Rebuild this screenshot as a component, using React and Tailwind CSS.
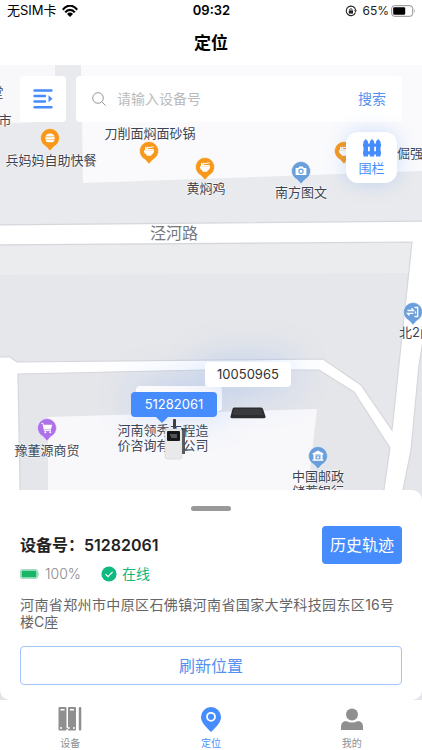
import { useState } from 'react';

const PINS = [
  { x: 50,  y: 138, kind: 'burger', color: '#f7981c' },
  { x: 149, y: 151, kind: 'noodle', color: '#f7981c' },
  { x: 205, y: 167, kind: 'noodle', color: '#f7981c' },
  { x: 344, y: 151, kind: 'noodle', color: '#f7981c' },
  { x: 301, y: 171, kind: 'camera', color: '#6b9fdc' },
  { x: 413, y: 312, kind: 'gate',   color: '#6b9fdc' },
  { x: 47,  y: 428, kind: 'cart',   color: '#ad72ea' },
  { x: 318, y: 456, kind: 'bank',   color: '#6b9fdc' },
];

const LABELS = [
  { x: -3,  y: 92,  lines: ['堂'] },
  { x: 5,   y: 120, lines: ['市'] },
  { x: 51,  y: 160, lines: ['兵妈妈自助快餐'] },
  { x: 150, y: 133, lines: ['刀削面焖面砂锅'] },
  { x: 206, y: 188, lines: ['黄焖鸡'] },
  { x: 301, y: 192, lines: ['南方图文'] },
  { x: 410, y: 153, lines: ['倔强'] },
  { x: 416, y: 332, lines: ['北2门'] },
  { x: 47,  y: 450, lines: ['豫董源商贸'] },
  { x: 163, y: 438, lines: ['河南领秀工程造', '价咨询有限公司'] },
  { x: 318, y: 484, lines: ['中国邮政', '储蓄银行'] },
];

// Map coordinates are in a 422 wide space that starts 65 below the page top
const place = ({ x, y }) => ({ left: `${(x / 422) * 100}%`, top: y - 65 });

const GLYPHS = {
  burger: (
    <g fill="#fff">
      <path d="M5.500 8.600C6 6.400 7.800 5.400 10 5.400s4 1 4.500 3.200z" />
      <rect x="5" y="9.300" width="10" height="1.600" rx=".8" />
      <path d="M5.500 11.600h9c-.2 1.800-1 2.600-2.400 2.600H7.900c-1.400 0-2.200-.8-2.400-2.600z" />
    </g>
  ),
  noodle: (
    <g fill="#fff">
      <path d="M4.800 9.300h10.400c0 2.300-1.200 3.800-2.800 4.500v.9H7.600v-.9c-1.600-.7-2.800-2.200-2.800-4.500z" />
      <path d="M6.500 9V6M8.200 9V5.600M6 7.400l8.800-1.700M6 8.600h8.800" stroke="#fff" strokeWidth="1" fill="none" />
    </g>
  ),
  camera: (
    <g>
      <path d="M4.600 7h2.700l1-1.500h3.400l1 1.500h2.700v7H4.600z" fill="#fff" />
      <circle cx="10" cy="10.300" r="2.100" fill="none" stroke="#6b9fdc" strokeWidth="1.200" />
    </g>
  ),
  gate: (
    <g stroke="#fff" strokeWidth="1.300" fill="none">
      <path d="M11.500 5.500h3.200v9h-3.200M12.500 9.500v2" />
      <path d="M4.500 8.500h6L8.500 6.300M10.500 11.300h-6l2 2.200" />
    </g>
  ),
  cart: (
    <g>
      <path d="M6.400 6.800h8.800l-1.300 4.600H7.300z" fill="#fff" />
      <path d="M4.400 5.400h1.600l1.500 7.200h6.500" stroke="#fff" strokeWidth="1" fill="none" />
      <circle cx="8.300" cy="14.200" r="1" fill="#fff" />
      <circle cx="13.200" cy="14.200" r="1" fill="#fff" />
    </g>
  ),
  bank: (
    <g>
      <path d="M4.500 7.600L10 4.500l5.500 3.100v1h-1v5h1v1.100h-11v-1.100h1v-5h-1z" fill="#fff" />
      <rect x="7.500" y="8.500" width="5" height="4.800" fill="#6b9fdc" />
      <path d="M8.600 9.200L10 10.600l1.400-1.400M10 10.600v2.400M8.700 11.500h2.600" stroke="#fff" strokeWidth=".8" fill="none" />
    </g>
  ),
};

function Pin({ pin }) {
  return (
    <svg viewBox="0 0 20 24" className="absolute w-5 h-6 -ml-[10px] -mt-[10px]" style={place(pin)} aria-hidden="true">
      <path
        d="M10 .5a9.500 9.500 0 0 1 3.800 18.200L10 23l-3.800-4.300A9.500 9.500 0 0 1 10 .5z"
        fill={pin.color}
        stroke="#fff"
        strokeWidth=".5"
      />
      {GLYPHS[pin.kind]}
    </svg>
  );
}

function MapLayer() {
  return (
    <div className="absolute inset-0 overflow-hidden bg-[#e2e3e7]">
      <svg viewBox="0 65 422 635" preserveAspectRatio="none" className="w-full h-[635px]" aria-hidden="true">
        <rect y="65" width="422" height="635" fill="#fff" />
        <g stroke="#d6d6dc" strokeWidth="1.200">
          <path d="M-5 60H430V221L-5 225z" fill="#e9eaed" />
          <path d="M-5 245L412 242L392 430L361 385L323 359L17 362L10 357H-5z" fill="#e6e7ea" />
          <path d="M18 374L205 370H319L354 392L390 448L378 530V705H24z" fill="#e5e6ea" />
          <path d="M424 335L419 365L411 450L395 530V705H430z" fill="#e5e6ea" />
          <path d="M-5 500H8V705H-5z" fill="#e2e3e7" stroke="none" />
        </g>
        <path d="M0 246L411 243L408 273L0 275z" fill="#ebecee" />
        <path d="M0 65H55V121L0 124z" fill="#f8f8fb" />
        <path d="M81 65H422V171L83 183z" fill="#fafafc" />
        <path d="M48 417L317 409L303 530H48z" fill="#f8f8fb" />
      </svg>

      <span className="absolute -translate-x-1/2 -translate-y-1/2 text-base leading-4 whitespace-nowrap text-[#77787c]" style={place({ x: 174, y: 233 })}>
        泾河路
      </span>

      {PINS.map((pin) => <Pin key={`${pin.x}-${pin.y}`} pin={pin} />)}

      {LABELS.map((label) => (
        <p
          key={label.lines[0]}
          className="absolute -translate-x-1/2 -translate-y-1/2 text-[13px] leading-[15px] whitespace-nowrap text-[#3c4452] [text-shadow:0_0_2px_#fff,0_0_2px_#fff,0_0_1px_#fff]"
          style={place(label)}
        >
          {label.lines.map((line) => <span key={line} className="block">{line}</span>)}
        </p>
      ))}

      {/* Device callouts */}
      <div
        className="absolute w-[86px] h-[25px] rounded bg-white/80 shadow-[0_0_40px_rgba(70,140,253,0.3)]"
        style={place({ x: 136, y: 386 })}
      />
      <button
        className="absolute w-[86px] h-[25px] rounded bg-white text-[13px] text-[#333] shadow-[0_0_40px_rgba(70,140,253,0.3)]"
        style={place({ x: 205, y: 362 })}
      >
        10050965
      </button>
      <button
        className="absolute w-[86px] h-[25px] rounded bg-[#468cfd] text-[13px] text-white"
        style={place({ x: 131, y: 392 })}
      >
        51282061
        <svg viewBox="0 0 12 6" className="absolute left-[25px] top-full w-3 h-[6px]" aria-hidden="true">
          <path d="M0 0h12L6 6z" fill="#468cfd" />
        </svg>
      </button>

      <svg viewBox="0 0 22 42" className="absolute w-[22px] h-[42px]" style={place({ x: 164, y: 418 })} aria-hidden="true">
        <rect x="9" y="1" width="3" height="13" rx="1" fill="#3d3f43" />
        <path d="M17 10h4v26h-4z" fill="#55575c" />
        <path d="M18.500 10v26" stroke="#2f3135" strokeWidth="1" />
        <rect x="1" y="11" width="17" height="30" rx="2" fill="#e9e9ea" stroke="#d4d4d7" strokeWidth=".6" />
        <rect x="3" y="13" width="13" height="10" rx="1" fill="#17181a" />
        <path d="M6 17h7M7 19h6" stroke="#8d8f93" strokeWidth="1" />
      </svg>
      <svg viewBox="0 0 36 12" className="absolute w-9 h-3" style={place({ x: 230, y: 407 })} aria-hidden="true">
        <path d="M4 .5h27q1.500 0 2 1.500l2.500 7.500q.3 1.800-1.500 1.800H2Q.2 11.300.5 9.500L2.500 2Q3 .5 4 .5z" fill="#2c2d2f" />
        <path d="M4 2h27l2 6H2.500z" fill="#3a3b3e" />
      </svg>
    </div>
  );
}

function StatusBar() {
  return (
    <div className="grid grid-cols-3 items-center h-[22px] pl-[7px] pr-[6px] text-[13px]">
      <div className="flex items-center gap-[5px]">
        <span>无SIM卡</span>
        <svg viewBox="0 0 16 12" className="w-4 h-3" aria-hidden="true">
          <path d="M.8 4.700C5-.6 11-.6 15.200 4.700M3.200 7.400C6 4 10 4 12.800 7.400" stroke="#000" strokeWidth="2.200" fill="none" />
          <path d="M5 8.900C6.800 7 9.200 7 11 8.900L8 12z" />
        </svg>
      </div>
      <span className="text-center font-semibold">09:32</span>
      <div className="flex items-center justify-end">
        <svg viewBox="0 0 12 12" className="w-3 h-3 mr-[5px]" fill="none" stroke="#222" aria-hidden="true">
          <path d="M10.400 7.500A4.700 4.700 0 1 1 10.600 5" strokeWidth="1.100" />
          <path d="M9 5.200h3l-1.500 2z" fill="#222" stroke="none" />
          <rect x="3.800" y="5.400" width="4.200" height="3.200" fill="#222" stroke="none" />
          <path d="M4.700 5.500V4.300q1.200-1.300 2.400 0v1.200" strokeWidth=".9" />
        </svg>
        <span className="text-xs text-[#222]">65%</span>
        <svg viewBox="0 0 25 12" className="w-[25px] h-3 ml-[2px]" aria-hidden="true">
          <rect x=".7" y=".7" width="21" height="10.600" rx="2.800" fill="none" stroke="#8c8c8c" />
          <rect x="2.200" y="2.200" width="12" height="7.600" rx="1.200" />
          <path d="M23 4q1.500 2 0 4z" fill="#8c8c8c" />
        </svg>
      </div>
    </div>
  );
}

const TABS = [
  {
    name: '设备',
    icon: (
      <g>
        <path d="M1.500 0h6Q8.500 0 8.500 1v21.500q0 1-1 1h-6q-1 0-1-1V1q0-1 1-1z" />
        <path d="M11 0h6q1 0 1 1v21.500q0 1-1 1h-6q-1 0-1-1V1q0-1 1-1z" />
        <rect x="20.800" width="2.500" height="23.500" rx="1" />
        <path d="M7 21.200h5v1H7z" />
        <g fill="#fff">
          <rect x="2.500" y="2" width="4" height="1.500" />
          <rect x="12" y="2" width="4" height="1.500" />
          <circle cx="3" cy="21" r="1" />
          <circle cx="10.800" cy="21" r="1" />
          <circle cx="16" cy="21" r="1" />
        </g>
      </g>
    ),
  },
  {
    name: '定位',
    icon: (
      <g>
        <path d="M12 0a10 10 0 0 1 10 10c0 6-6 11-10 15C8 21 2 16 2 10A10 10 0 0 1 12 0z" />
        <circle cx="12" cy="9.800" r="4" fill="none" stroke="#fff" strokeWidth="1.800" />
      </g>
    ),
  },
  {
    name: '我的',
    icon: (
      <g>
        <circle cx="12" cy="7.500" r="6" />
        <path d="M1 23v-3.500q0-5 5-5.500 6 3 12 0 5 .5 5 5.500V23z" />
      </g>
    ),
  },
];

export default function App() {
  const [query, setQuery] = useState('');
  const [tab,   setTab]   = useState('定位');

  return (
    <div className="min-h-screen flex flex-col overflow-hidden bg-white text-black font-[Inter,'Noto_Sans_CJK_SC',sans-serif]">
      <header>
        <StatusBar />
        <h1 className="h-[43px] text-center text-[17px] leading-[43px] font-bold">定位</h1>
      </header>

      <main className="relative flex-1 flex flex-col">
        <MapLayer />

        <div className="relative flex gap-[10px] px-5 pt-[11px]">
          <button aria-label="设备列表" className="flex items-center justify-center w-[46px] h-[46px] rounded bg-white">
            <svg viewBox="0 0 20 20" className="w-5 h-5" fill="none" stroke="#468cfd" strokeWidth="2.400" strokeLinecap="round" aria-hidden="true">
              <path d="M1.500 1.500h17M1.500 7h10.500M1.500 12.500h10.500M1.500 18.200h17" />
              <path d="M15.500 6.300l4 3.500-4 3.500z" fill="#468cfd" stroke="none" />
            </svg>
          </button>
          <form className="flex-1 flex items-center h-[46px] px-4 rounded bg-white" onSubmit={(e) => e.preventDefault()}>
            <svg viewBox="0 0 14 14" className="w-[14px] h-[14px] shrink-0" fill="none" stroke="#999" aria-hidden="true">
              <circle cx="6" cy="6" r="5.300" />
              <path d="M10 10l3.600 3.600" />
            </svg>
            <input
              aria-label="设备号"
              value={query}
              onChange={(e) => setQuery(e.target.value)}
              placeholder="请输入设备号"
              className="flex-1 min-w-0 ml-[11px] text-sm outline-none placeholder:text-[#bbb]"
            />
            <button type="submit" className="text-sm text-[#5490f0]">搜索</button>
          </form>
        </div>

        <button className="relative self-end flex flex-col items-center justify-center gap-[3px] w-[51px] h-[51px] mt-[10px] mr-[25px] rounded-xl bg-white text-[13px] leading-4 text-[#468cfd] shadow-[0_0_20px_rgba(70,140,253,0.25)]">
          <svg viewBox="0 0 18 18" className="w-[18px] h-[18px]" fill="#468cfd" aria-hidden="true">
            <path d="M.5 2.500L2.800 0 5 2.500v15H.5zM6.800 2.500L9 0l2.200 2.500v15H6.800zM13 2.500L15.200 0l2.300 2.500v15H13z" />
            <path d="M0 4.500h18v3.200H0zM0 12.300h18v3.200H0z" />
          </svg>
          围栏
        </button>

        {/* Device sheet */}
        <section className="relative mt-auto px-5 pt-4 pb-[15px] rounded-[10px] bg-white">
          <div className="w-10 h-[5px] mx-auto rounded-full bg-[#999]" />
          <div className="flex items-center justify-between mt-[15px]">
            <h2 className="text-base font-semibold text-[#222]">设备号：51282061</h2>
            <button className="h-[38px] px-2 rounded bg-[#468cfd] text-base text-white">历史轨迹</button>
          </div>
          <div className="flex items-center text-sm leading-5">
            <svg viewBox="0 0 19 10" className="w-[19px] h-[10px]" aria-hidden="true">
              <rect x=".5" y=".5" width="17" height="9" rx="1.500" fill="#fff" stroke="#a6d9c1" />
              <rect x="1.500" y="1.500" width="15" height="7" rx=".5" fill="#18b566" />
              <path d="M18 3.500h1v3h-1z" fill="#a6d9c1" />
            </svg>
            <span className="ml-[6px] font-light text-[#888]">100%</span>
            <svg viewBox="0 0 16 16" className="w-4 h-4 ml-5" aria-hidden="true">
              <circle cx="8" cy="8" r="7.600" fill="#10b981" />
              <path d="M4.500 8.200l2.500 2.500 4.600-4.800" fill="none" stroke="#fff" strokeWidth="1.200" />
            </svg>
            <span className="ml-[5px] text-[#12b77c]">在线</span>
          </div>
          <p className="mt-3 mr-2 text-sm leading-[17px] text-justify text-[#666]">
            河南省郑州市中原区石佛镇河南省国家大学科技园东区16号楼C座
          </p>
          <button className="w-full h-[39px] mt-4 rounded border border-[#a3c4fa] text-base text-[#5490f0]">
            刷新位置
          </button>
        </section>
      </main>

      <nav className="grid grid-cols-3 h-[50px] bg-white">
        {TABS.map(({ name, icon }) => (
          <button
            key={name}
            onClick={() => setTab(name)}
            className={`flex flex-col items-center pt-[7px] text-[10px] leading-3 ${tab === name ? 'text-[#468cfd]' : 'text-[#8f8f8f]'}`}
          >
            <svg viewBox="0 0 24 25" className="w-6 h-[25px] mb-[5px]" fill="currentColor" aria-hidden="true">{icon}</svg>
            {name}
          </button>
        ))}
      </nav>
    </div>
  );
}
